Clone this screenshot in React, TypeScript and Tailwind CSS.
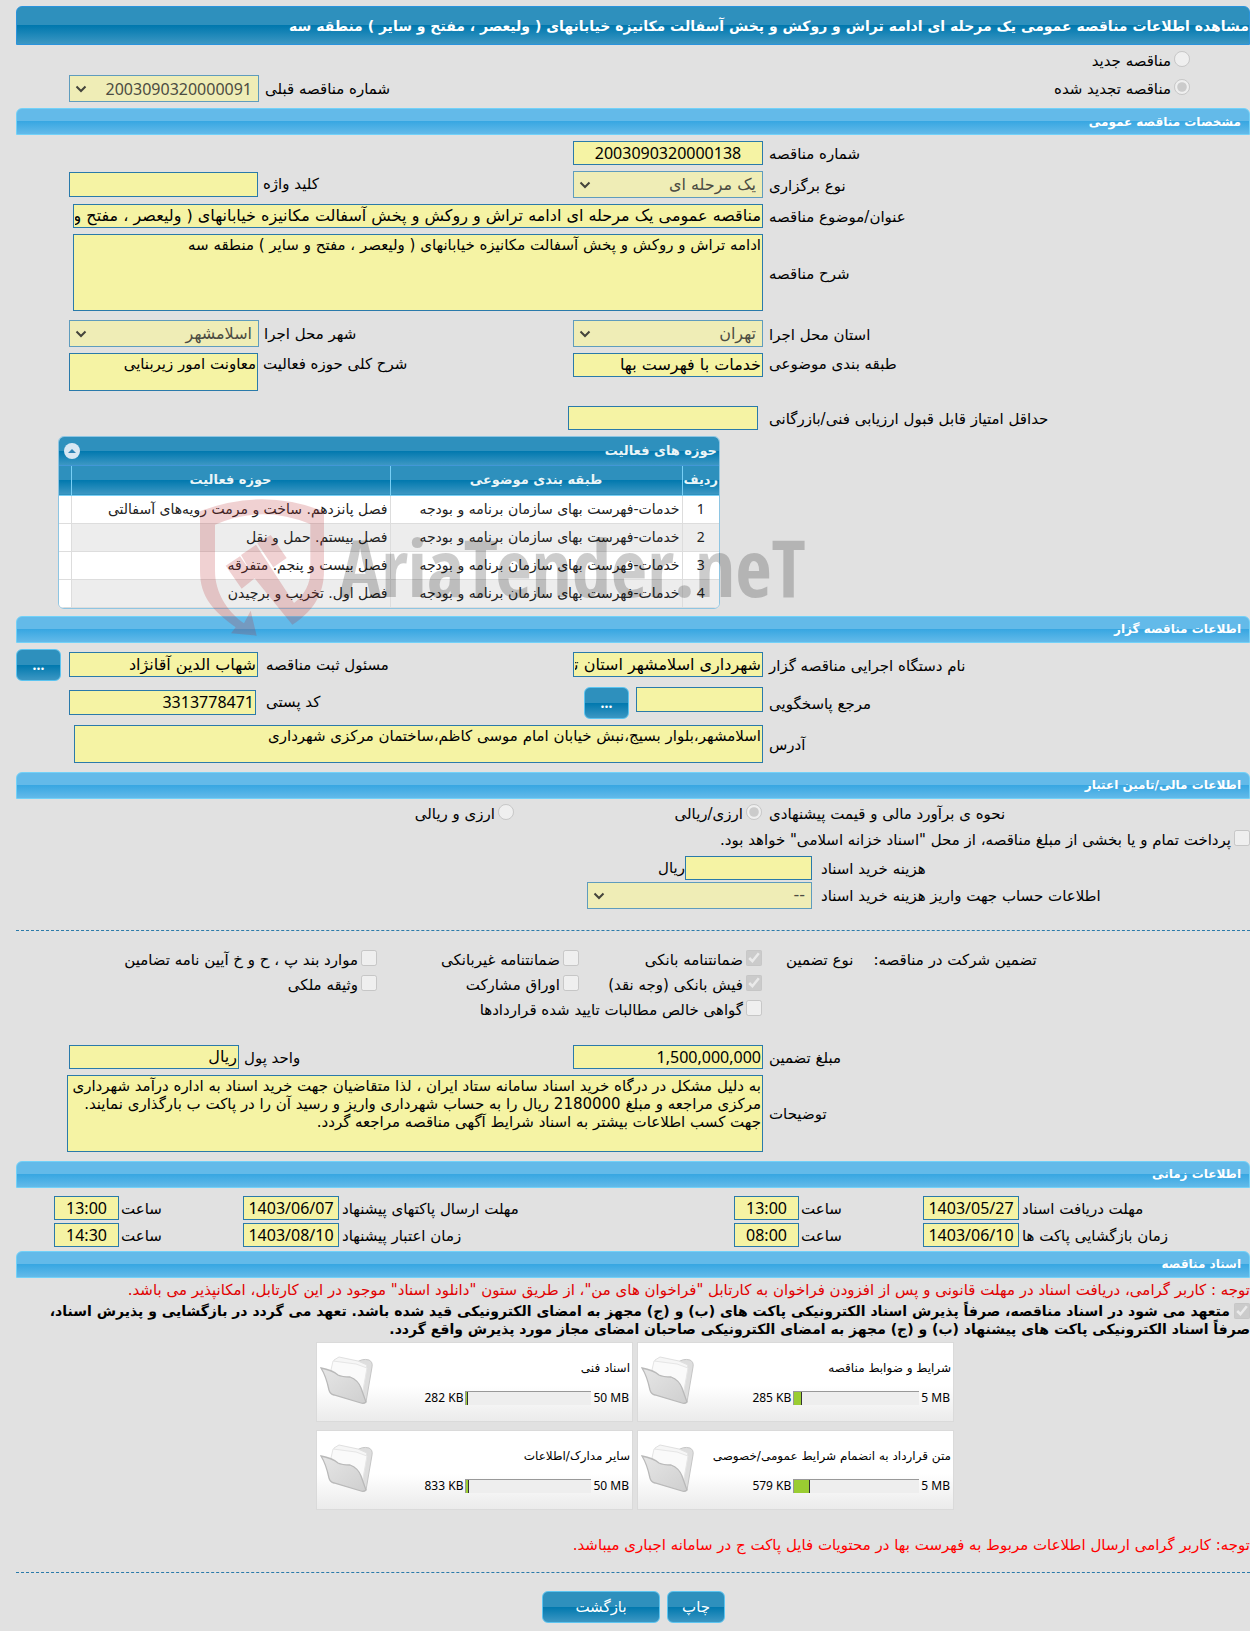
import type { ReactNode } from 'react'

const FIELD = 'border border-[#2a7aaa] bg-[#f5f3a4] text-black outline-none rounded-none px-px'

const NUM = "font-['Noto_Sans',sans-serif]"

const BLUE =
  'bg-[linear-gradient(to_bottom,#2e90bd_0%,#2e90bd_49%,#0078ae_50%,#3c97c3_100%)]'

interface SelectProps {
  id: string
  value: string
  className: string
}

function Select({ id, value, className }: SelectProps) {
  return (
    <div className={`relative ${className}`}>
      <select
        id={id}
        disabled
        className="h-[27px] w-full appearance-none rounded-none border border-[#5f9cbd] bg-[#efedb6] pr-1.5 pl-6 text-base leading-6 text-[#4c4c42] opacity-100"
      >
        <option>{value}</option>
      </select>
      <svg className="pointer-events-none absolute top-2 left-1.5 h-3 w-3" viewBox="0 0 12 12" fill="none" stroke="#44443c" strokeWidth="2">
        <path d="M1.5 3.5L6 8l4.500-4.500" />
      </svg>
    </div>
  )
}

function SectionBar({ children }: { children: ReactNode }) {
  return (
    <h2 className="flex h-[27px] items-center rounded-t-md border border-[#72d1f8] bg-[linear-gradient(to_bottom,#63bae9_0%,#63bae9_49%,#38a7e2_50%,#63bae9_100%)] pr-2 text-xs font-bold text-white">
      {children}
    </h2>
  )
}

interface RowProps {
  label: string
  htmlFor: string
  className?: string
  children: ReactNode
}

function Row({ label, htmlFor, className = 'items-center', children }: RowProps) {
  return (
    <div className={`flex ${className}`}>
      <label htmlFor={htmlFor} className="flex-1 pt-0.5 pl-1.5 text-left">{label}</label>
      <div className="flex w-[747px] items-start justify-between pl-[53px]">{children}</div>
    </div>
  )
}

interface TickProps {
  label: string
  type?: 'checkbox' | 'radio'
  name?: string
  checked?: boolean
}

function Tick({ label, type = 'checkbox', name, checked = false }: TickProps) {
  return (
    <label className="flex items-center gap-[3px] whitespace-nowrap">
      <input type={type} name={name} disabled defaultChecked={checked} className="mb-1 h-4 w-4 shrink-0" />
      {label}
    </label>
  )
}

function MoreButton() {
  return (
    <button type="button" className={`h-8 w-[45px] rounded-md border border-[#5cc4f0] ${BLUE} ${NUM} text-sm font-bold text-white`}>
      ...
    </button>
  )
}

function Watermark() {
  return (
    <div dir="ltr" aria-hidden="true" className="pointer-events-none absolute top-[63px] left-[142px] flex items-start">
      <svg width="125" height="137" viewBox="480 225 375 411" fill="#b9262b" fillOpacity="0.21">
        <path d="M480 262Q666 190 852 262V440C852 515 815 565 757 602L643 462L690 427L762 537C795 510 811 480 811 440V300Q666 240 525 302V440C525 505 560 560 612 598L632 560L650 635L573 628L587 610C520 560 480 520 480 440Z" />
        <path d="M557 425L600 397L645 462L605 494ZM603 393L648 362L690 427L643 462ZM652 358L692 333L740 402L700 430Z" />
      </svg>
      <span className="mt-5 ml-3.5 font-['Open_Sans_Condensed','Roboto_Condensed','Liberation_Sans_Narrow',sans-serif] text-[79px] leading-[96px] font-bold whitespace-nowrap text-black/20">
        AriaTender.neT
      </span>
    </div>
  )
}

const ACTIVITIES = [
  'فصل پانزدهم. ساخت و مرمت رویه‌های آسفالتی',
  'فصل بیستم. حمل و نقل',
  'فصل بیست و پنجم. متفرقه',
  'فصل اول. تخریب و برچیدن',
]

function ActivityTable() {
  return (
    <div className="relative mr-[530px] ml-[42px]">
      <div className="overflow-hidden rounded-md border border-[#8ec5e2] bg-white">
        <div className={`flex h-[29px] items-center justify-between border-b border-[#4297d7] ${BLUE} pr-0.5 pl-[5px] text-[13px] font-bold text-[#eaf5f7]`}>
          حوزه های فعالیت
          <button type="button" aria-label="بستن جدول" className="flex h-4 w-4 items-center justify-center rounded-full bg-[#d8e7f3]">
            <svg width="8" height="4" viewBox="0 0 8 4" fill="#2e83b5"><path d="M0 4L4 0L8 4Z" /></svg>
          </button>
        </div>
        <table className="w-full table-fixed border-collapse text-[#222]">
          <thead>
            <tr className={`h-[29px] border-b border-[#78cff5] ${BLUE} text-[13px] text-[#eaf5f7]`}>
              <th className="w-[37px]">ردیف</th>
              <th className="border-x border-[#78cff5]">طبقه بندی موضوعی</th>
              <th className="w-[319px]">حوزه فعالیت</th>
              <th className="w-[12px] border-r border-[#78cff5]"></th>
            </tr>
          </thead>
          <tbody>
            {ACTIVITIES.map((name, i) => (
              <tr key={name} className="h-7 border-b border-[#ddd] text-sm odd:bg-white even:bg-[#ededed]">
                <td className={`text-center ${NUM}`}>{i + 1}</td>
                <td className="border-x border-[#ddd] pr-0.5">خدمات-فهرست بهای سازمان برنامه و بودجه</td>
                <td className="pr-0.5">{name}</td>
                <td className="border-r border-[#ddd] bg-white"></td>
              </tr>
            ))}
          </tbody>
        </table>
      </div>
      <Watermark />
    </div>
  )
}

interface TimeRowProps {
  items: { label: string; date: string; time: string }[]
}

function TimeRow({ items }: TimeRowProps) {
  return (
    <div className="grid grid-cols-[1fr_96px_124px_65px_395px_96px_124px_65px] items-center pl-[38px]">
      {items.map((it) => (
        <div key={it.label} className="contents">
          <label htmlFor={it.date} className="pt-0.5 pl-[3px] text-left">{it.label}</label>
          <input id={it.date} readOnly value={it.date} className={`h-6 w-full text-center text-base ${NUM} ${FIELD}`} />
          <label htmlFor={`${it.date}-time`} className="pt-0.5 pl-0.5 text-left">ساعت</label>
          <input id={`${it.date}-time`} readOnly value={it.time} className={`h-6 w-full text-center text-base ${NUM} ${FIELD}`} />
        </div>
      ))}
    </div>
  )
}

function Folder() {
  return (
    <svg width="54" height="52" viewBox="0 0 54 52">
      <defs>
        <linearGradient id="front" x1="0" y1="0" x2="1" y2="1">
          <stop offset="0" stopColor="#e6e6e6" />
          <stop offset="1" stopColor="#cfcfcf" />
        </linearGradient>
      </defs>
      <path d="M36 7Q42 2 49 4Q53 6 52 11L46 46L40 44Z" fill="#dedede" stroke="#c6c6c6" />
      <path d="M12 12L14 4L19 1L38 5L47 9L43 36L14 30Z" fill="#f6f6f6" stroke="#e0e0e0" />
      <path d="M11 14L13 5L36 8L47 12L42 40Z" fill="#fafafa" stroke="#e6e6e6" />
      <path d="M1 12Q12 14 18 19Q22 21 30 21Q38 24 41 32L46 46Q44 48 41 47L14 39Q10 38 9 34Q6 20 1 12Z" fill="url(#front)" stroke="#b9b9b9" strokeWidth="1.3" />
    </svg>
  )
}

interface Doc {
  title: string
  used: string
  max: string
  fill: number
}

const DOCS: Doc[] = [
  { title: 'شرایط و ضوابط مناقصه', used: '285 KB', max: '5 MB', fill: 8 },
  { title: 'اسناد فنی', used: '282 KB', max: '50 MB', fill: 2 },
  { title: 'متن قرارداد به انضمام شرایط عمومی/خصوصی', used: '579 KB', max: '5 MB', fill: 16 },
  { title: 'سایر مدارک/اطلاعات', used: '833 KB', max: '50 MB', fill: 3 },
]

function DocCard({ title, used, max, fill }: Doc) {
  return (
    <div className="flex h-20 items-center justify-between border border-[#dadada] bg-[linear-gradient(to_bottom,#fff_55%,#ebebeb)] pr-0.5 pl-[3px]">
      <div className="flex flex-col gap-3 whitespace-nowrap">
        <span className="text-xs leading-5">{title}</span>
        <div dir="ltr" className={`flex items-center justify-end gap-0.5 pr-px text-xs leading-4 ${NUM}`}>
          {used}
          <div className="h-3.5 w-[126px] border-t border-l border-[#999] bg-[#eee]">
            <div className="h-full border-r border-[#333] bg-[#9acd32]" style={{ width: fill }} />
          </div>
          {max}
        </div>
      </div>
      <Folder />
    </div>
  )
}

export default function App() {
  return (
    <div dir="rtl" className="min-h-screen overflow-hidden bg-[#e1e1e1] pt-1.5 pl-4 font-['DejaVu_Sans',sans-serif] text-[15px] leading-[18px] text-black">
      <h1 className={`flex h-[39px] items-center rounded-t-md border border-[#2a93dc] ${BLUE} text-sm font-bold whitespace-nowrap text-white`}>
        مشاهده اطلاعات مناقصه عمومی یک مرحله ای ادامه تراش و روکش و پخش آسفالت مکانیزه خیابانهای ( ولیعصر ، مفتح و سایر ) منطقه سه
      </h1>

      <div className="mt-0.5 flex h-7 items-center pr-[60px]">
        <Tick type="radio" name="kind" label="مناقصه جدید" />
      </div>
      <div className="mb-1.5 flex h-[27px] items-center justify-between pr-[60px] pl-[53px]">
        <Tick type="radio" name="kind" label="مناقصه تجدید شده" checked />
        <div className="flex items-center gap-1.5">
          <label htmlFor="prev">شماره مناقصه قبلی</label>
          <Select id="prev" value="2003090320000091" className={`w-[190px] ${NUM}`} />
        </div>
      </div>

      <section>
        <SectionBar>مشخصات مناقصه عمومی</SectionBar>
        <div className="flex flex-col gap-1.5 pt-1.5 pb-[7px]">
          <Row label="شماره مناقصه" htmlFor="number">
            <input id="number" readOnly value="2003090320000138" className={`h-6 w-[190px] text-center text-base ${NUM} ${FIELD}`} />
          </Row>
          <Row label="نوع برگزاری" htmlFor="type">
            <Select id="type" value="یک مرحله ای" className="w-[190px]" />
            <div className="flex items-center gap-[5px]">
              <label htmlFor="keyword">کلید واژه</label>
              <input id="keyword" readOnly className={`mt-px h-[25px] w-[189px] text-base ${FIELD}`} />
            </div>
          </Row>
          <Row label="عنوان/موضوع مناقصه" htmlFor="subject">
            <input
              id="subject"
              readOnly
              value="مناقصه عمومی یک مرحله ای ادامه تراش و روکش و پخش آسفالت مکانیزه خیابانهای ( ولیعصر ، مفتح و سایر ) منطقه سه"
              className={`h-6 w-[690px] text-base ${FIELD}`}
            />
          </Row>
          <Row label="شرح مناقصه" htmlFor="desc">
            <textarea
              id="desc"
              readOnly
              value="ادامه تراش و روکش و پخش آسفالت مکانیزه خیابانهای ( ولیعصر ، مفتح و سایر ) منطقه سه"
              className={`h-[77px] w-[690px] resize-none pt-px ${FIELD}`}
            />
          </Row>
          <Row label="استان محل اجرا" htmlFor="province" className="items-center pt-[3px]">
            <Select id="province" value="تهران" className="w-[190px]" />
            <div className="flex items-center gap-[5px]">
              <label htmlFor="city">شهر محل اجرا</label>
              <Select id="city" value="اسلامشهر" className="w-[190px]" />
            </div>
          </Row>
          <Row label="طبقه بندی موضوعی" htmlFor="class" className="items-start">
            <input id="class" readOnly value="خدمات با فهرست بها" className={`h-6 w-[190px] text-base ${FIELD}`} />
            <div className="flex items-start gap-[5px]">
              <label htmlFor="scope" className="pt-0.5">شرح کلی حوزه فعالیت</label>
              <textarea id="scope" readOnly value="معاونت امور زیربنایی" className={`h-[38px] w-[189px] resize-none pt-px ${FIELD}`} />
            </div>
          </Row>
          <Row label="حداقل امتیاز قابل قبول ارزیابی فنی/بازرگانی" htmlFor="score" className="items-center pt-[9px]">
            <input id="score" readOnly className={`mr-[5px] h-6 w-[190px] text-base ${FIELD}`} />
          </Row>
          <ActivityTable />
        </div>
      </section>

      <section>
        <SectionBar>اطلاعات مناقصه گزار</SectionBar>
        <div className="flex flex-col gap-1.5 pt-1.5 pb-[9px]">
          <div className="flex items-center">
            <label htmlFor="org" className="flex-1 pt-0.5 pl-1.5 text-left">نام دستگاه اجرایی مناقصه گزار</label>
            <div className="flex w-[747px] items-center justify-between">
              <input id="org" readOnly value="شهرداری اسلامشهر استان تهران" className={`h-[25px] w-[190px] text-base ${FIELD}`} />
              <div className="flex items-center gap-2">
                <label htmlFor="owner">مسئول ثبت مناقصه</label>
                <input id="owner" readOnly value="شهاب الدین آقانژاد" className={`h-[25px] w-[189px] text-base ${FIELD}`} />
                <MoreButton />
              </div>
            </div>
          </div>
          <Row label="مرجع پاسخگویی" htmlFor="contact">
            <div className="flex items-start gap-[7px]">
              <input id="contact" readOnly className={`h-[25px] w-[127px] text-base ${FIELD}`} />
              <MoreButton />
            </div>
            <div className="flex items-center gap-2.5 pt-[3px]">
              <label htmlFor="postal">کد پستی</label>
              <input id="postal" readOnly value="3313778471" className={`h-[25px] w-[187px] text-base ${NUM} ${FIELD}`} />
            </div>
          </Row>
          <Row label="آدرس" htmlFor="address">
            <textarea
              id="address"
              readOnly
              value="اسلامشهر،بلوار بسیج،نبش خیابان امام موسی کاظم،ساختمان مرکزی شهرداری"
              className={`h-[38px] w-[689px] resize-none pt-px ${FIELD}`}
            />
          </Row>
        </div>
      </section>

      <section>
        <SectionBar>اطلاعات مالی/تامین اعتبار</SectionBar>
        <div className="mt-0.5 flex h-[26px] items-center">
          <span className="flex-1 pl-[7px] text-left">نحوه ی برآورد مالی و قیمت پیشنهادی</span>
          <div className="flex w-[746px]">
            <div className="w-[248px]"><Tick type="radio" name="currency" label="ارزی/ریالی" checked /></div>
            <Tick type="radio" name="currency" label="ارزی و ریالی" />
          </div>
        </div>
        <div className="flex h-[27px] items-center">
          <Tick label={'پرداخت تمام و یا بخشی از مبلغ مناقصه، از محل "اسناد خزانه اسلامی" خواهد بود.'} />
        </div>
        <div className="mt-0.5 flex items-center">
          <label htmlFor="cost" className="flex-1 pt-0.5 pl-[9px] text-left">هزینه خرید اسناد</label>
          <div className="flex w-[796px] items-center">
            <input id="cost" readOnly className={`h-6 w-[127px] text-base ${FIELD}`} />
            ریال
          </div>
        </div>
        <div className="mt-0.5 flex items-center">
          <label htmlFor="account" className="flex-1 pt-0.5 pl-[9px] text-left">اطلاعات حساب جهت واریز هزینه خرید اسناد</label>
          <div className="w-[796px]">
            <Select id="account" value="--" className="w-[225px]" />
          </div>
        </div>

        <hr className="mt-[21px] mb-[17px] border-t border-dashed border-[#2a7aaa]" />

        <div className="grid auto-rows-[25px] grid-cols-[1fr_183px_202px_361px] items-center">
          <div className="flex justify-end gap-5 pl-6">
            <span>تضمین شرکت در مناقصه:</span>
            <span>نوع تضمین</span>
          </div>
          <Tick label="ضمانتنامه بانکی" checked />
          <Tick label="ضمانتنامه غیربانکی" />
          <Tick label="موارد بند پ ، ح و خ آیین نامه تضامین" />
          <span />
          <Tick label="فیش بانکی (وجه نقد)" checked />
          <Tick label="اوراق مشارکت" />
          <Tick label="وثیقه ملکی" />
          <span />
          <Tick label="گواهی خالص مطالبات تایید شده قراردادها" />
        </div>

        <div className="flex flex-col gap-1.5 pt-[22px] pb-[9px]">
          <Row label="مبلغ تضمین" htmlFor="amount">
            <input id="amount" readOnly value="1,500,000,000" className={`h-6 w-[190px] text-base ${NUM} ${FIELD}`} />
            <div className="flex items-center gap-[5px]">
              <label htmlFor="unit" className="pt-0.5">واحد پول</label>
              <input id="unit" readOnly value="ریال" className={`h-6 w-[170px] text-base ${FIELD}`} />
            </div>
          </Row>
          <Row label="توضیحات" htmlFor="notes">
            <textarea
              id="notes"
              readOnly
              value={
                'به دلیل مشکل در درگاه خرید اسناد سامانه ستاد ایران ، لذا متقاضیان جهت خرید اسناد به اداره درآمد شهرداری مرکزی مراجعه و مبلغ 2180000 ریال را به حساب شهرداری واریز و رسید آن را در پاکت ب بارگذاری نمایند.\nجهت کسب اطلاعات بیشتر به اسناد شرایط آگهی مناقصه مراجعه گردد.'
              }
              className={`h-[77px] w-[696px] shrink-0 resize-none pt-px ${FIELD}`}
            />
          </Row>
        </div>
      </section>

      <section>
        <SectionBar>اطلاعات زمانی</SectionBar>
        <div className="flex flex-col gap-[3px] pt-2 pb-1">
          <TimeRow
            items={[
              { label: 'مهلت دریافت اسناد', date: '1403/05/27', time: '13:00' },
              { label: 'مهلت ارسال پاکتهای پیشنهاد', date: '1403/06/07', time: '13:00' },
            ]}
          />
          <TimeRow
            items={[
              { label: 'زمان بازگشایی پاکت ها', date: '1403/06/10', time: '08:00' },
              { label: 'زمان اعتبار پیشنهاد', date: '1403/08/10', time: '14:30' },
            ]}
          />
        </div>
      </section>

      <section>
        <SectionBar>اسناد مناقصه</SectionBar>
        <p className="mt-[3px] text-[#e00000]">
          توجه : کاربر گرامی، دریافت اسناد در مهلت قانونی و پس از افزودن فراخوان به کارتابل "فراخوان های من"، از طریق ستون "دانلود اسناد" موجود در این کارتابل، امکانپذیر می باشد.
        </p>
        <label className="mt-[3px] block text-sm leading-[18px] font-bold">
          <input type="checkbox" disabled defaultChecked className="ml-1 h-4 w-4 align-text-bottom" />
          متعهد می شود در اسناد مناقصه، صرفاً پذیرش اسناد الکترونیکی پاکت های (ب) و (ج) مجهز به امضای الکترونیکی قید شده باشد. تعهد می گردد در بازگشایی و پذیرش اسناد،
          <br />
          صرفاً اسناد الکترونیکی پاکت های پیشنهاد (ب) و (ج) مجهز به امضای الکترونیکی صاحبان امضای مجاز مورد پذیرش واقع گردد.
        </label>
        <div className="mt-1 grid grid-cols-[317px_317px] justify-center gap-x-1 gap-y-2 pl-1">
          {DOCS.map((d) => <DocCard key={d.title} {...d} />)}
        </div>
        <p className="mt-[26px] text-[#f00]">
          توجه: کاربر گرامی ارسال اطلاعات مربوط به فهرست بها در محتویات فایل پاکت ج در سامانه اجباری میباشد.
        </p>
      </section>

      <hr className="mt-[18px] border-t border-dashed border-[#2a7aaa]" />

      <div className="flex justify-center gap-[7px] pt-[18px] pb-1 pl-px">
        <button type="button" className={`h-8 w-[58px] rounded-md border border-[#5cc4f0] ${BLUE} text-white`}>چاپ</button>
        <button type="button" className={`h-8 w-[118px] rounded-md border border-[#5cc4f0] ${BLUE} text-white`}>بازگشت</button>
      </div>
    </div>
  )
}
